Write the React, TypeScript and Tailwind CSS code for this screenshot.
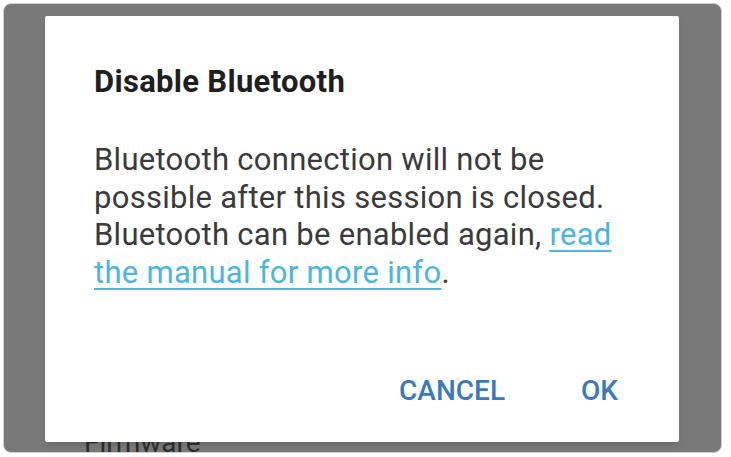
export default function App() {
  return (
    <div className="w-[731px] h-[457px] bg-white p-[3px] font-['Roboto',sans-serif]">
      <div className="relative w-[719px] h-[450px] rounded-[8px] bg-[#797979] border border-[#cfcfcf] overflow-hidden">
        {/* page behind the scrim */}
        <div className="absolute left-[80px] top-[-30px] text-[28px] text-[#2e2e2e]">Product</div>
        <div className="absolute left-[80px] top-[418px] text-[28px] text-[#2e2e2e]">Firmware</div>

        {/* dialog */}
        <div className="relative mt-[12px] ml-[41px] w-[634px] h-[426px] bg-white rounded-[2px] shadow-md flex flex-col">
          <div className="pt-[50px] px-[49px]">
            <h2 className="text-[31px] font-bold tracking-[0.3px] text-[#1f1f1f] leading-[32px]">Disable Bluetooth</h2>
            <p className="mt-[43px] max-w-[530px] text-[31px] tracking-[0.28px] leading-[37.5px] text-[#3a3a3a]">
              Bluetooth connection will not be possible after this session is closed. Bluetooth can be enabled again,{' '}
              <span className="text-[#4cb4e0] underline underline-offset-[5px] decoration-[2px]">read the manual for more info</span>.
            </p>
          </div>
          <div className="mt-auto mb-[35px] flex justify-end gap-[76px] pr-[61px]">
            <button className="text-[28px] leading-[32px] font-medium text-[#3b78c0]">CANCEL</button>
            <button className="text-[28px] leading-[32px] font-medium text-[#3b78c0]">OK</button>
          </div>
        </div>
      </div>
    </div>
  );
}
